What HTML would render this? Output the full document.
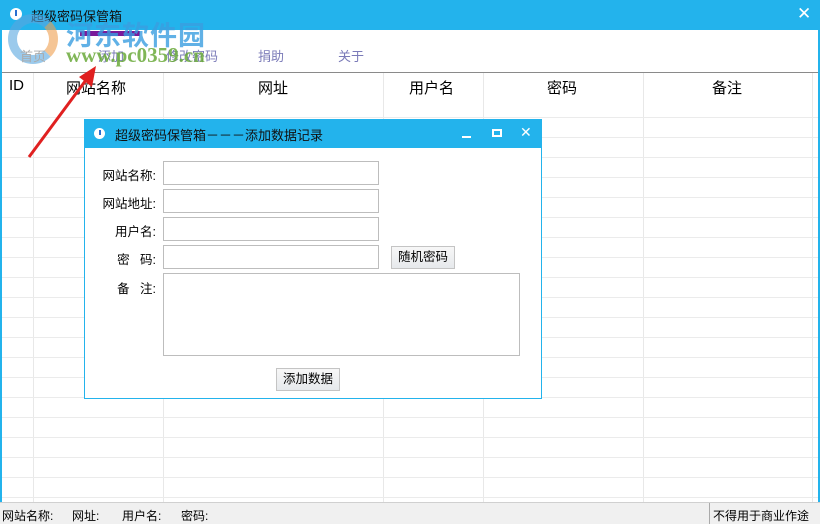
<!DOCTYPE html><html><head><meta charset="utf-8"><style>
*{margin:0;padding:0;box-sizing:border-box}
body{width:820px;height:524px;position:relative;overflow:hidden;background:#fff;font-family:"Liberation Sans","Noto Sans CJK SC",sans-serif;font-size:13px;color:#000}
.a{position:absolute}
.vl{position:absolute;top:73px;bottom:22px;width:1px;background:#e8e8e8}
.hl{position:absolute;left:2px;right:2px;height:1px;background:#ebebeb}
.inp{position:absolute;left:163px;width:216px;height:24px;border:1px solid #bdbdbd;background:#fff}
.lbl{position:absolute;width:72px;text-align:right;left:84px;font-size:12.5px}
.btn{position:absolute;border:1px solid #c4c4c4;background:linear-gradient(#f7f7f7,#e6e9ec);font-size:12.5px;text-align:center;line-height:21px}
</style></head><body>
<div class="a" style="left:0;top:0;width:820px;height:30px;background:#23b3ec"></div>
<div class="a" style="left:0;top:30px;width:2px;height:472px;background:#23b3ec"></div>
<div class="a" style="left:818px;top:30px;width:2px;height:472px;background:#23b3ec"></div>
<div class="a" style="left:10px;top:8px;width:12px;height:12px;border-radius:50%;background:#fff;"></div>
<div class="a" style="left:15px;top:10px;width:2px;height:6px;background:#2a6fd0"></div>
<div class="a" style="left:31px;top:6px;color:#111;font-size:13px">超级密码保管箱</div>
<div class="a" style="left:797px;top:4px;color:#fff;font-size:17px">✕</div>
<div class="a" style="left:80px;top:31px;width:60px;height:5px;background:#7a1a9a"></div>
<div class="a" style="left:66px;top:14px;color:#3a9ee0;font-size:27px;font-weight:bold;opacity:.8;letter-spacing:1px">河东软件园</div>
<div class="a" style="left:8px;top:14px;width:50px;height:50px;border-radius:50%;border:9px solid #5aa7e0;border-right-color:#f0a050;opacity:.6"></div>
<div class="a" style="left:20px;top:46px;color:#aaa;font-size:13px">首页</div>
<div class="a" style="left:98px;top:46px;color:#7b7bb8;font-size:13px">添加</div>
<div class="a" style="left:166px;top:46px;color:#7b7bb8;font-size:13px">修改密码</div>
<div class="a" style="left:258px;top:46px;color:#7b7bb8;font-size:13px">捐助</div>
<div class="a" style="left:338px;top:46px;color:#7b7bb8;font-size:13px">关于</div>
<div class="a" style="left:66px;top:43px;color:#6aaa3a;font-size:21px;font-weight:bold;font-family:'Liberation Serif',serif;opacity:.85">www.pc0359.cn</div>
<div class="a" style="left:2px;top:72px;width:816px;height:1px;background:#8a8a8a"></div>
<div class="vl" style="left:33px"></div><div class="vl" style="left:163px"></div><div class="vl" style="left:383px"></div><div class="vl" style="left:483px"></div><div class="vl" style="left:643px"></div><div class="vl" style="left:812px"></div>
<div class="hl" style="top:117px"></div><div class="hl" style="top:137px"></div><div class="hl" style="top:157px"></div><div class="hl" style="top:177px"></div><div class="hl" style="top:197px"></div><div class="hl" style="top:217px"></div><div class="hl" style="top:237px"></div><div class="hl" style="top:257px"></div><div class="hl" style="top:277px"></div><div class="hl" style="top:297px"></div><div class="hl" style="top:317px"></div><div class="hl" style="top:337px"></div><div class="hl" style="top:357px"></div><div class="hl" style="top:377px"></div><div class="hl" style="top:397px"></div><div class="hl" style="top:417px"></div><div class="hl" style="top:437px"></div><div class="hl" style="top:457px"></div><div class="hl" style="top:477px"></div><div class="hl" style="top:497px"></div>
<div class="a" style="top:77px;left:9px;font-size:15px">ID</div>
<div class="a" style="top:77px;left:66px;font-size:15px">网站名称</div>
<div class="a" style="top:77px;left:258px;font-size:15px">网址</div>
<div class="a" style="top:77px;left:409px;font-size:15px">用户名</div>
<div class="a" style="top:77px;left:547px;font-size:15px">密码</div>
<div class="a" style="top:77px;left:712px;font-size:15px">备注</div>
<svg class="a" style="left:0;top:0" width="820" height="524"><line x1="29" y1="157" x2="86" y2="80" stroke="#e02020" stroke-width="3"/><polygon points="96,66 79,77 92,87" fill="#e02020"/></svg>
<div class="a" style="left:0;top:502px;width:820px;height:22px;background:#f0f0f0;border-top:1px solid #d0d0d0"></div>
<div class="a" style="left:2px;top:507px;font-size:12px">网站名称:</div>
<div class="a" style="left:72px;top:507px;font-size:12px">网址:</div>
<div class="a" style="left:122px;top:507px;font-size:12px">用户名:</div>
<div class="a" style="left:181px;top:507px;font-size:12px">密码:</div>
<div class="a" style="left:709px;top:503px;width:1px;height:21px;background:#aaa"></div>
<div class="a" style="left:713px;top:507px;font-size:12px">不得用于商业作途</div>
<div class="a" style="left:84px;top:119px;width:458px;height:280px;background:#fff;border:1px solid #23b3ec"></div>
<div class="a" style="left:84px;top:119px;width:458px;height:29px;background:#23b3ec"></div>
<div class="a" style="left:94px;top:128px;width:11px;height:11px;border-radius:50%;background:#fff"></div>
<div class="a" style="left:99px;top:130px;width:2px;height:5px;background:#2a6fd0"></div>
<div class="a" style="left:115px;top:125px;font-size:13px;color:#111">超级密码保管箱－－－添加数据记录</div>
<div class="a" style="left:462px;top:136px;width:9px;height:2px;background:#fff"></div>
<div class="a" style="left:492px;top:129px;width:10px;height:8px;border:2px solid #fff"></div>
<div class="a" style="left:520px;top:124px;color:#fff;font-size:14px">✕</div>
<div class="lbl" style="top:165px">网站名称:</div>
<div class="lbl" style="top:193px">网站地址:</div>
<div class="lbl" style="top:221px">用户名:</div>
<div class="lbl" style="top:249px">密&nbsp;&nbsp;&nbsp;码:</div>
<div class="lbl" style="top:278px">备&nbsp;&nbsp;&nbsp;注:</div>
<div class="inp" style="top:161px"></div><div class="inp" style="top:189px"></div><div class="inp" style="top:217px"></div><div class="inp" style="top:245px"></div>
<div class="inp" style="top:273px;width:357px;height:83px"></div>
<div class="btn" style="left:391px;top:246px;width:64px;height:23px">随机密码</div>
<div class="btn" style="left:276px;top:368px;width:64px;height:23px">添加数据</div>
</body></html>
